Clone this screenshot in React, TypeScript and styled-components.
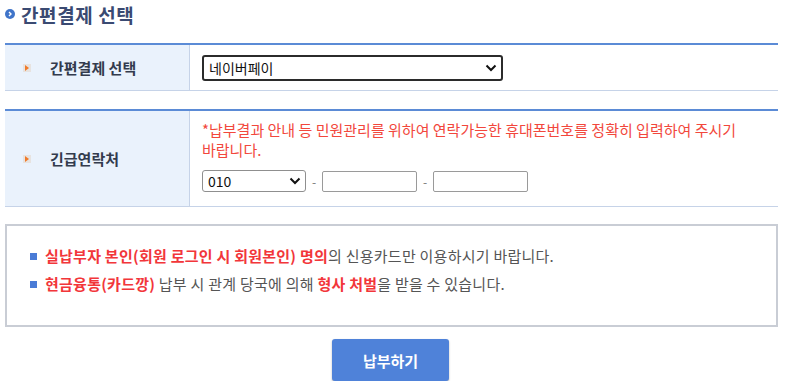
import React from "react";
import styled, { createGlobalStyle } from "styled-components";

const GlobalStyle = createGlobalStyle`
  html, body {
    margin: 0;
    padding: 0;
    background: #ffffff;
  }
  body {
    font-family: "Noto Sans CJK KR", "Noto Sans", sans-serif;
    font-size: 15px;
    color: #555;
  }
`;

const Page = styled.div`
  width: 773px;
  padding: 3px 0 0 5px;
`;

const Title = styled.h2`
  display: flex;
  align-items: center;
  gap: 6px;
  margin: 0 0 18px;
  height: 22px;
  font-size: 19px;
  letter-spacing: 0.6px;
  font-weight: 700;
  color: #3a4a72;
`;

const TitleDot = styled.span`
  width: 10px;
  height: 10px;
  border-radius: 50%;
  background: #3f74c9;
  display: flex;
  align-items: center;
  justify-content: center;
`;

const Table = styled.div<{ $gap?: number }>`
  border-top: 2px solid #5b8bd6;
  border-bottom: 1px solid #c6d3e8;
  margin-bottom: ${(p) => p.$gap ?? 0}px;
`;

const Row = styled.div<{ $h: number }>`
  display: grid;
  grid-template-columns: 185px 1fr;
  min-height: ${(p) => p.$h}px;
`;

const Label = styled.div`
  background: #eaf2fc;
  border-right: 1px solid #c6d3e8;
  display: flex;
  align-items: center;
  padding-left: 18px;
  gap: 19px;
  font-weight: 700;
  font-size: 15px;
  color: #333b4d;
`;

const LabelIcon = styled.span`
  width: 8px;
  height: 8px;
  background: #e7e3e0;
  display: flex;
  align-items: center;
  justify-content: center;
`;

const Cell = styled.div<{ $pad: string }>`
  padding: ${(p) => p.$pad};
  display: flex;
  flex-direction: column;
  justify-content: center;
`;

const Select = styled.div<{ $w: number; $h: number; $thick?: boolean }>`
  box-sizing: border-box;
  width: ${(p) => p.$w}px;
  height: ${(p) => p.$h}px;
  border: ${(p) => (p.$thick ? "2px solid #2b2b2b" : "1px solid #8f8f8f")};
  border-radius: 3px;
  display: flex;
  align-items: center;
  justify-content: space-between;
  padding: 0 4px 0 5px;
  font-size: 14px;
  color: #111;
  background: #fff;
`;

const Notice = styled.p`
  margin: 0 0 10px;
  color: #f2473c;
  font-size: 15px;
  line-height: 20px;
`;

const PhoneRow = styled.div`
  display: flex;
  align-items: center;
`;

const Dash = styled.span`
  width: 16px;
  text-align: center;
  color: #777;
  font-size: 12px;
`;

const Input = styled.div`
  box-sizing: border-box;
  width: 95px;
  height: 21px;
  border: 1px solid #9a9a9a;
  border-radius: 2px;
`;

const InfoBox = styled.div`
  box-sizing: border-box;
  border: 2px solid #c9cdd5;
  height: 103px;
  padding: 20px 0 0 23px;
  display: flex;
  flex-direction: column;
  gap: 8px;
`;

const InfoLine = styled.div`
  display: flex;
  align-items: center;
  gap: 8px;
  line-height: 20px;
  color: #555;
  font-size: 15px;
  letter-spacing: 0.25px;
`;

const Bullet = styled.span`
  width: 7px;
  height: 7px;
  background: #4a7bd6;
`;

const Em = styled.b`
  color: #f2363a;
  font-weight: 700;
`;

const Footer = styled.div`
  display: flex;
  justify-content: center;
  padding: 12px 2px 0 0;
`;

const PayButton = styled.button`
  width: 117px;
  height: 42px;
  border: none;
  border-radius: 3px;
  background: #4f82d9;
  box-shadow: 0 1px 2px rgba(0, 0, 0, 0.3);
  color: #fff;
  font-family: inherit;
  font-size: 15px;
  font-weight: 700;
`;

const Chevron = () => (
  <svg width="12" height="8" viewBox="0 0 12 8">
    <path d="M1.5 1.5 L6 6 L10.5 1.5" fill="none" stroke="#111" strokeWidth="2" />
  </svg>
);

const Arrow = () => (
  <LabelIcon>
    <svg width="4" height="6" viewBox="0 0 4 6">
      <path d="M0 0 L4 3 L0 6 Z" fill="#f07a2a" />
    </svg>
  </LabelIcon>
);

export default function App() {
  return (
    <Page>
      <GlobalStyle />
      <Title>
        <TitleDot>
          <svg width="6" height="6" viewBox="0 0 6 6">
            <path d="M2 1 L4 3 L2 5" fill="none" stroke="#fff" strokeWidth="1.4" />
          </svg>
        </TitleDot>
        간편결제 선택
      </Title>

      <Table $gap={18}>
        <Row $h={45}>
          <Label>
            <Arrow />
            간편결제 선택
          </Label>
          <Cell $pad="0 0 0 12px">
            <Select $w={301} $h={26} $thick>
              <span>네이버페이</span>
              <Chevron />
            </Select>
          </Cell>
        </Row>
      </Table>

      <Table $gap={17}>
        <Row $h={95}>
          <Label>
            <Arrow />
            긴급연락처
          </Label>
          <Cell $pad="7px 0 12px 12px">
            <Notice>
              *납부결과 안내 등 민원관리를 위하여 연락가능한 휴대폰번호를 정확히 입력하여 주시기
              <br />
              바랍니다.
            </Notice>
            <PhoneRow>
              <Select $w={104} $h={22}>
                <span>010</span>
                <Chevron />
              </Select>
              <Dash>-</Dash>
              <Input />
              <Dash>-</Dash>
              <Input />
            </PhoneRow>
          </Cell>
        </Row>
      </Table>

      <InfoBox>
        <InfoLine>
          <Bullet />
          <span>
            <Em>실납부자 본인(회원 로그인 시 회원본인) 명의</Em>의 신용카드만 이용하시기 바랍니다.
          </span>
        </InfoLine>
        <InfoLine>
          <Bullet />
          <span>
            <Em>현금융통(카드깡)</Em> 납부 시 관계 당국에 의해 <Em>형사 처벌</Em>을 받을 수 있습니다.
          </span>
        </InfoLine>
      </InfoBox>

      <Footer>
        <PayButton>납부하기</PayButton>
      </Footer>
    </Page>
  );
}
